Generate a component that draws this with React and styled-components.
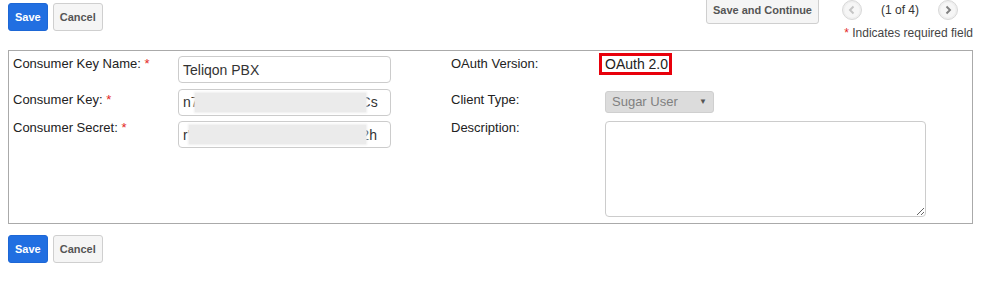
import React from "react"
import styled, { createGlobalStyle } from "styled-components"

const GlobalStyle = createGlobalStyle`
  body {
    margin: 0;
    background: #fff;
    font-family: "Liberation Sans", Arial, sans-serif;
    color: #222;
  }
`

const Page = styled.div`
  width: 987px;
  height: 294px;
  overflow: hidden;
`

const Header = styled.div`
  display: flex;
  justify-content: space-between;
  align-items: flex-start;
  height: 50px;
  box-sizing: border-box;
  padding: 3px 14px 0 8px;
`

const ButtonGroup = styled.div`
  display: flex;
  gap: 5px;
`

const Button = styled.button`
  height: 28px;
  padding: 0 6px;
  border-radius: 3px;
  font-family: "Liberation Sans", Arial, sans-serif;
  font-size: 11px;
  font-weight: bold;
  cursor: pointer;
  border: 1px solid ${(p) => (p.$primary ? "#1d67d6" : "#cfcfcf")};
  background: ${(p) => (p.$primary ? "#216fe1" : "#f5f5f5")};
  color: ${(p) => (p.$primary ? "#fff" : "#555")};
`

const RightGroup = styled.div`
  display: flex;
  flex-direction: column;
  align-items: flex-end;
`

const TopRow = styled.div`
  display: flex;
  align-items: center;
  margin-top: -7px;
  padding-right: 15px;
`

const Pager = styled.div`
  display: flex;
  align-items: center;
  gap: 19px;
  margin-left: 23px;
  font-size: 12px;
  color: #333;
`

const Required = styled.div`
  margin-top: 2px;
  font-size: 12px;
  color: #444;
`

const Star = styled.span`
  color: #e3281f;
`

const FormBox = styled.div`
  margin: 0 14px 0 8px;
  border: 1px solid #aaa;
  padding: 1px 0 6px 4px;
  display: grid;
  grid-template-columns: 165px 273px 154px 1fr;
  grid-template-rows: 32.5px 32.5px auto;
  align-items: start;
`

const Label = styled.div`
  font-size: 13px;
  line-height: 15px;
  color: #222;
  padding-top: ${(p) => p.$top}px;
`

const Input = styled.div`
  margin-top: 4px;
  width: 213px;
  height: 27px;
  box-sizing: border-box;
  border: 1px solid #ccc;
  border-radius: 4px;
  padding: 0 4px;
  display: flex;
  align-items: center;
  font-size: 14px;
  color: #333;
  white-space: nowrap;
  overflow: hidden;
`

const Mask = styled.span`
  position: relative;
  z-index: 1;
  display: inline-block;
  flex: none;
  width: ${(p) => p.$w}px;
  height: 19px;
  margin: 0 ${(p) => p.$mr}px 0 ${(p) => p.$ml}px;
  background: #ebebeb;
  box-shadow: 0 0 2px 1px #eee;
`

const Version = styled.div`
  margin-top: 1px;
  justify-self: start;
  margin-left: -6px;
  border: 3px solid #e8000b;
  padding: 0 1px 0 3px;
  font-size: 14px;
  line-height: 16px;
  color: #222;
`

const Select = styled.div`
  margin-top: 6px;
  width: 109px;
  height: 22px;
  box-sizing: border-box;
  border: 1px solid #cfcfcf;
  border-radius: 3px;
  background: #dcdcdc;
  display: flex;
  align-items: center;
  justify-content: space-between;
  padding: 0 6px;
  font-size: 13px;
  color: #808080;
`

const Caret = styled.span`
  font-size: 8px;
  color: #555;
`

const TextArea = styled.textarea`
  margin-top: 4px;
  width: 321px;
  height: 96px;
  box-sizing: border-box;
  border: 1px solid #ccc;
  border-radius: 4px;
  resize: both;
  display: block;
`

const Footer = styled.div`
  padding: 11px 8px 0;
`

const Circle = ({ dir, disabled }) => (
  <svg width="20" height="20" viewBox="0 0 20 20">
    <circle cx="10" cy="10" r="9.5" fill="#efefef" stroke="#d8d8d8" />
    <circle cx="10" cy="10" r="7.5" fill="#f6f6f6" />
    <path
      d={dir === "left" ? "M11.5 6.5 L8 10 L11.5 13.5" : "M8.5 6.5 L12 10 L8.5 13.5"}
      fill="none"
      stroke={disabled ? "#c4c4c4" : "#808080"}
      strokeWidth="1.9"
    />
  </svg>
)

const Req = () => <Star> *</Star>

export default function App() {
  return (
    <Page>
      <GlobalStyle />
      <Header>
        <ButtonGroup>
          <Button $primary>Save</Button>
          <Button>Cancel</Button>
        </ButtonGroup>
        <RightGroup>
          <TopRow>
            <Button>Save and Continue</Button>
            <Pager>
              <Circle dir="left" disabled />
              <span>(1 of 4)</span>
              <Circle dir="right" />
            </Pager>
          </TopRow>
          <Required>
            <Star>*</Star> Indicates required field
          </Required>
        </RightGroup>
      </Header>

      <FormBox>
        <Label $top={4}>
          Consumer Key Name:<Req />
        </Label>
        <Input>Teliqon PBX</Input>
        <Label $top={4}>OAuth Version:</Label>
        <Version>OAuth 2.0</Version>

        <Label $top={7}>
          Consumer Key:<Req />
        </Label>
        <Input>
          <span>n7</span>
          <Mask $w={171} $ml={-4} $mr={-5} />
          <span>Cs</span>
        </Input>
        <Label $top={7}>Client Type:</Label>
        <Select>
          <span>Sugar User</span>
          <Caret>▼</Caret>
        </Select>

        <Label $top={3}>
          Consumer Secret:<Req />
        </Label>
        <Input>
          <span>r'</span>
          <Mask $w={177} $ml={-1} $mr={-5} />
          <span>2h</span>
        </Input>
        <Label $top={3}>Description:</Label>
        <TextArea />
      </FormBox>

      <Footer>
        <ButtonGroup>
          <Button $primary>Save</Button>
          <Button>Cancel</Button>
        </ButtonGroup>
      </Footer>
    </Page>
  )
}
